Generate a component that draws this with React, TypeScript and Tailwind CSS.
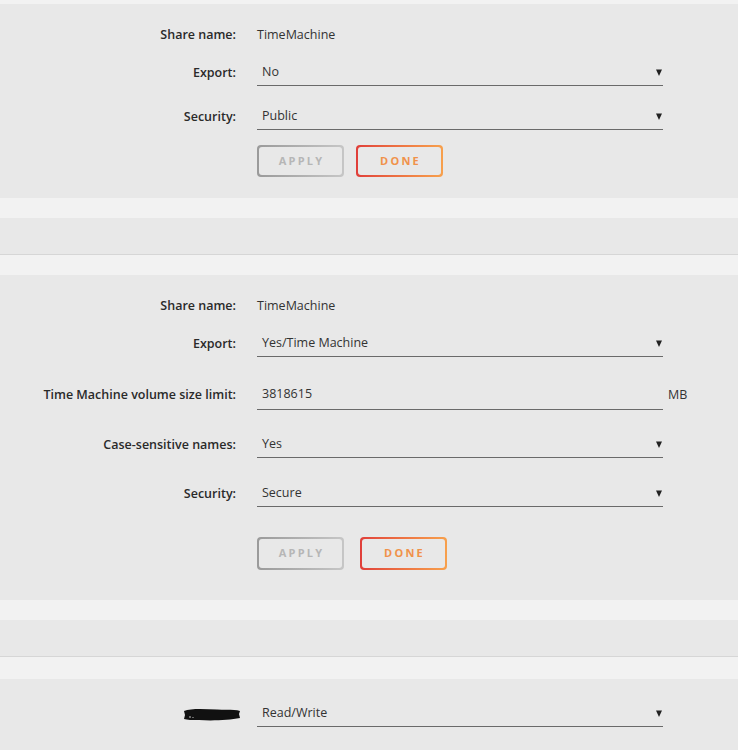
import React from 'react';

const font = { fontFamily: '"Open Sans", "Noto Sans", sans-serif' };

function Arrow() {
  return (
    <svg width="6" height="7" viewBox="0 0 6 7" className="shrink-0">
      <polygon points="0,0.5 6,0.5 3,7" fill="#222" />
    </svg>
  );
}

function Label({ children }: { children: React.ReactNode }) {
  return (
    <div className="w-[236px] shrink-0 pt-[2px] text-right text-[12.5px] font-semibold text-[#2a2a2a]">
      {children}
    </div>
  );
}

function StaticRow({ label, value, className = '' }: { label: string; value: string; className?: string }) {
  return (
    <div className={'flex h-[28px] items-center gap-[21px] ' + className}>
      <Label>{label}</Label>
      <div className="pt-[2px] text-[12.5px] text-[#333]">{value}</div>
    </div>
  );
}

function SelectRow({ label, value, className = '' }: { label: React.ReactNode; value: string; className?: string }) {
  return (
    <div className={'flex items-center gap-[21px] ' + className}>
      <Label>{label}</Label>
      <div className="flex h-[28px] w-[406px] items-center justify-between border-b-[1.5px] border-[#6a6a6a] pl-[5px] pr-[1px] pt-[2px]">
        <span className="text-[12.5px] text-[#333]">{value}</span>
        <Arrow />
      </div>
    </div>
  );
}

function Buttons({ gap, className = '' }: { gap: string; className?: string }) {
  return (
    <div className={'flex pl-[257px] ' + gap + ' ' + className}>
      <div className="h-full w-[87px] rounded-[4px] bg-gradient-to-r from-[#9a9a9a] to-[#c6c6c6] p-[2px]">
        <div className="flex h-full w-full items-center justify-center rounded-[3px] bg-[#e8e8e8] pl-[2px] text-[11px] font-bold tracking-[0.2em] text-[#b6b6b6]">
          APPLY
        </div>
      </div>
      <div className="h-full w-[87px] rounded-[4px] bg-gradient-to-r from-[#e03e3a] to-[#f7a04c] p-[2px]">
        <div className="flex h-full w-full items-center justify-center rounded-[3px] bg-[#e8e8e8] pl-[2px] text-[11px] font-bold tracking-[0.2em] text-[#f0924a]">
          DONE
        </div>
      </div>
    </div>
  );
}

function Header() {
  return <div className="h-[37px] border-b border-[#d6d6d6] bg-[#e8e8e8]" />;
}

function Scribble() {
  return (
    <svg width="58" height="15" viewBox="0 0 58 15" className="-mr-[5px] ml-auto">
      <path
        d="M1 4 C 8 1, 22 2, 34 2.5 C 44 3, 52 2, 57 4 L 56 7 L 57 11 C 46 13, 30 14, 16 13 C 9 13, 4 13, 1 12 L 2 8 Z"
        fill="#111"
      />
      <circle cx="7" cy="10" r="0.8" fill="#ddd" />
      <circle cx="10" cy="10.5" r="0.6" fill="#ccc" />
    </svg>
  );
}

export default function App() {
  return (
    <div className="min-h-[750px] bg-[#f2f2f2] pt-[4px]" style={font}>
      {/* Share 1 */}
      <div className="bg-[#e8e8e8] pb-[21px] pt-[16px]">
        <StaticRow label="Share name:" value="TimeMachine" />
        <SelectRow label="Export:" value="No" className="mt-[10px]" />
        <SelectRow label="Security:" value="Public" className="mt-[16px]" />
        <Buttons gap="gap-[12px]" className="mt-[15px] h-[32px]" />
      </div>

      <div className="h-[20px]" />
      <Header />
      <div className="h-[20px]" />

      {/* Share 2 */}
      <div className="bg-[#e8e8e8] pb-[30px] pt-[16px]">
        <StaticRow label="Share name:" value="TimeMachine" />
        <SelectRow label="Export:" value="Yes/Time Machine" className="mt-[10px]" />
        <div className="mt-[21px] flex items-center gap-[21px]">
          <Label>Time Machine volume size limit:</Label>
          <div className="flex h-[32px] w-[406px] items-center border-b-[1.5px] border-[#6a6a6a] pl-[5px] pt-[2px]">
            <span className="text-[12.5px] text-[#333]">3818615</span>
          </div>
          <span className="-ml-[16px] pt-[2px] text-[12.5px] text-[#333]">MB</span>
        </div>
        <SelectRow label="Case-sensitive names:" value="Yes" className="mt-[20px]" />
        <SelectRow label="Security:" value="Secure" className="mt-[21px]" />
        <Buttons gap="gap-[16px]" className="mt-[30px] h-[33px]" />
      </div>

      <div className="h-[20px]" />
      <Header />
      <div className="h-[22px]" />

      {/* Share 3 */}
      <div className="bg-[#e8e8e8] pb-[30px] pt-[20px]">
        <SelectRow label={<div className="flex"><Scribble /></div>} value="Read/Write" />
      </div>
    </div>
  );
}
